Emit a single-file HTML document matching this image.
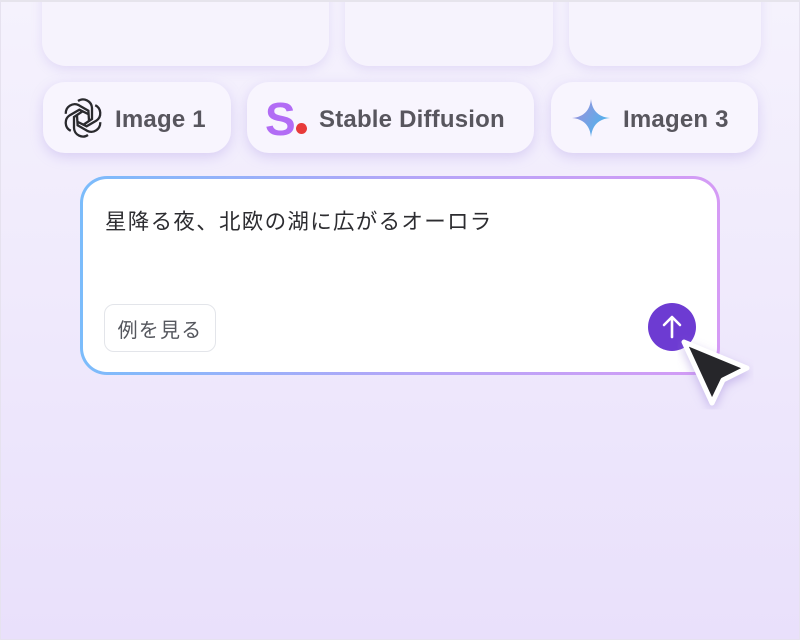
<!DOCTYPE html>
<html><head><meta charset="utf-8"><style>
*{margin:0;padding:0;box-sizing:border-box}
body{width:800px;height:640px;overflow:hidden;font-family:"Liberation Sans","Noto Sans CJK JP",sans-serif;position:relative}
.frame{position:absolute;left:0;top:0;width:800px;height:640px;background:linear-gradient(#f5f2fd,#e9e0fb)}
.edge{position:absolute;left:0;top:0;width:800px;height:640px;border:1px solid #e6e2ef;border-top:2px solid #e6e4ec;z-index:10;pointer-events:none}
.card{position:absolute;background:#f6f3fd;border-radius:24px;box-shadow:0 4px 10px rgba(180,160,230,.25)}
.chip{position:absolute;background:#f8f5fe;border-radius:22px;box-shadow:0 4px 12px rgba(170,150,230,.35);font-weight:bold;font-size:24px;color:#58565e}
.chip span.t{position:absolute;left:72px;top:24px;letter-spacing:0.2px}
.box{position:absolute;left:80px;top:176px;width:640px;height:199px;border-radius:27px;background:linear-gradient(90deg,#7bbcfb,#b3a6f8 50%,#d59bf5);padding:3px}
.inner{width:100%;height:100%;background:#fff;border-radius:24px;position:relative}
</style></head><body>
<div class="frame"></div>
<div class="edge"></div>
<div class="card" style="left:42px;top:-30px;width:287px;height:96px"></div>
<div class="card" style="left:345px;top:-30px;width:208px;height:96px"></div>
<div class="card" style="left:569px;top:-30px;width:192px;height:96px"></div>

<div class="chip" style="left:43px;top:82px;width:188px;height:71px">
<svg style="position:absolute;left:19px;top:15px" width="42" height="42" viewBox="0 0 42 42" fill="none" stroke="#2a2a2e" stroke-width="2.3">
<g transform="translate(21 21)">
<path d="M-5,-17 a9,9 0 0 1 14,7 v11 l-9,6"/>
<path d="M-5,-17 a9,9 0 0 1 14,7 v11 l-9,6" transform="rotate(60)"/>
<path d="M-5,-17 a9,9 0 0 1 14,7 v11 l-9,6" transform="rotate(120)"/>
<path d="M-5,-17 a9,9 0 0 1 14,7 v11 l-9,6" transform="rotate(180)"/>
<path d="M-5,-17 a9,9 0 0 1 14,7 v11 l-9,6" transform="rotate(240)"/>
<path d="M-5,-17 a9,9 0 0 1 14,7 v11 l-9,6" transform="rotate(300)"/>
</g></svg>
<span class="t">Image 1</span></div>

<div class="chip" style="left:247px;top:82px;width:287px;height:71px">
<span style="position:absolute;left:18px;top:10px;font-size:46px;font-weight:bold;color:#b26cf5">S</span>
<span style="position:absolute;left:49px;top:41px;width:11px;height:11px;border-radius:50%;background:#e83a3a"></span>
<span class="t">Stable Diffusion</span></div>

<div class="chip" style="left:551px;top:82px;width:207px;height:71px">
<svg style="position:absolute;left:21px;top:17px" width="38" height="38" viewBox="0 0 38 38"><defs><linearGradient id="g" x1="0" y1="0" x2="1" y2="0.6"><stop offset="0" stop-color="#a98ad8"/><stop offset="1" stop-color="#4bb5ee"/></linearGradient></defs>
<path d="M19 0 C20 11 26 18 38 19 C26 20 20 27 19 38 C18 27 12 20 0 19 C12 18 18 11 19 0Z" fill="url(#g)"/></svg>
<span class="t">Imagen 3</span></div>

<div class="box"><div class="inner">
<div style="position:absolute;left:22px;top:26px;font-size:21.5px;color:#2c2c30;letter-spacing:1.3px">星降る夜、北欧の湖に広がるオーロラ</div>
<div style="position:absolute;left:21px;top:125px;width:112px;height:48px;border:1.5px solid #e3e5ea;border-radius:10px;font-size:20px;color:#55575e;display:flex;align-items:center;justify-content:center;letter-spacing:1.2px">例を見る</div>
<div style="position:absolute;left:565px;top:124px;width:48px;height:48px;border-radius:50%;background:#6d3bd2">
<svg width="48" height="48" viewBox="0 0 48 48" fill="none" stroke="#fff" stroke-width="2.6" stroke-linecap="round" stroke-linejoin="round"><path d="M24 34V14M16 22l8-8 8 8"/></svg></div>
</div></div>

<svg style="position:absolute;left:670px;top:325px" width="100" height="100" viewBox="670 325 100 100">
<filter id="s"><feDropShadow dx="0" dy="4" stdDeviation="5" flood-color="#9a80d8" flood-opacity=".45"/></filter>
<path d="M684 342 L747 368 L723 380 L712 403 Z" fill="#25262a" stroke="#fff" stroke-width="5" stroke-linejoin="round" filter="url(#s)"/>
</svg>
</body></html>
